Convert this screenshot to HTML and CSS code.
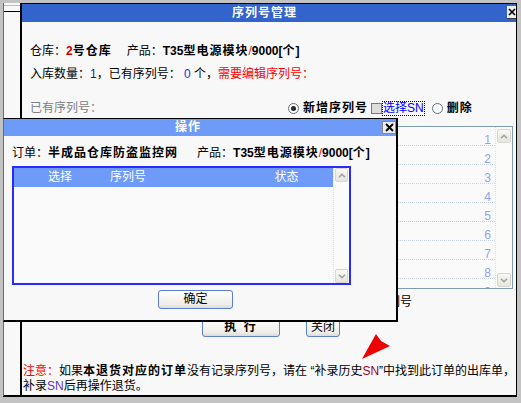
FILE: index.html
```html
<!DOCTYPE html>
<html>
<head>
<meta charset="utf-8">
<link rel="stylesheet" href="styles.css">
</head>
<body>
<div class="desk">
  <div class="strip"><div class="strip-top"></div></div>
  <div class="main">
    <div class="titlebar">
      <div class="title">序列号管理</div>
      <div class="close-btn"><svg width="8" height="8" viewBox="0 0 8 8"><path d="M1 1L7 7M7 1L1 7" stroke="#000" stroke-width="1.7"/></svg></div>
    </div>
    <div class="content">
      <div class="info">
        <div class="line">仓库：<span class="b red2">2</span><span class="bc">号仓库</span><span class="sp1"></span>产品：<span class="b">T35</span><span class="bc">型电源模块</span><span class="red">/</span><span class="b">9000[</span><span class="bc">个</span><span class="b">]</span></div>
        <div class="line line2">入库数量：<span class="navy">1</span>，已有序列号： <span class="blue">0</span> 个，<span class="red">需要编辑序列号：</span></div>
      </div>
      <div class="row3">
        <div class="gray-label">已有序列号：</div>
        <div class="opts">
          <span class="radio on"></span><span class="bc opt-label">新增序列号</span>
          <span class="check"></span><span class="sel-link">选择SN</span>
          <span class="radio"></span><span class="bc opt-label">删除</span>
        </div>
      </div>
      <div class="ta">
        <div class="ta-lines">
          <div class="ta-row">1</div>
          <div class="ta-row">2</div>
          <div class="ta-row">3</div>
          <div class="ta-row">4</div>
          <div class="ta-row">5</div>
          <div class="ta-row">6</div>
          <div class="ta-row">7</div>
          <div class="ta-row">8</div>
          <div class="ta-row">9</div>
        </div>
        <div class="vscroll">
          <div class="sb-btn"><svg width="8" height="5" viewBox="0 0 8 5"><path d="M1 4.2L4 1.2L7 4.2" fill="none" stroke="#a0a0a0" stroke-width="1.5"/></svg></div>
          <div class="sb-btn"><svg width="8" height="5" viewBox="0 0 8 5"><path d="M1 0.8L4 3.8L7 0.8" fill="none" stroke="#a0a0a0" stroke-width="1.5"/></svg></div>
        </div>
      </div>
      <div class="selrow">已选择序列号</div>
      <div class="btnrow">
        <button class="btn btn-exec">执 行</button>
        <button class="btn btn-close">关闭</button>
      </div>
      <div class="note">
        <div class="note-line"><span class="red">注意：</span>如果<span class="bc">本退货对应的订单</span>没有记录序列号，请在 “补录历史<span class="maroon">SN</span>”中找到此订单的出库单，</div>
        <div class="note-line">补录<span class="violet">SN</span>后再操作退货。</div>
      </div>
    </div>
  </div>
</div>

<div class="modal">
  <div class="m-title">
    <div class="m-title-text">操作</div>
    <div class="m-close"><svg width="9" height="9" viewBox="0 0 9 9"><path d="M1 1L8 8M8 1L1 8" stroke="#000" stroke-width="1.8"/></svg></div>
  </div>
  <div class="m-body">
    <div class="m-line">订单：<span class="bc">半成品仓库防盗监控网</span><span class="sp2"></span>产品：<span class="b">T35</span><span class="bc">型电源模块</span><span class="red">/</span><span class="b">9000[</span><span class="bc">个</span><span class="b">]</span></div>
    <div class="m-table">
      <div class="m-grid">
        <div class="m-head">
          <div class="c1">选择</div>
          <div class="c2">序列号</div>
          <div class="c3">状态</div>
        </div>
      </div>
      <div class="m-scroll">
        <div class="sb-btn"><svg width="8" height="5" viewBox="0 0 8 5"><path d="M1 4.2L4 1.2L7 4.2" fill="none" stroke="#a0a0a0" stroke-width="1.5"/></svg></div>
        <div class="sb-btn"><svg width="8" height="5" viewBox="0 0 8 5"><path d="M1 0.8L4 3.8L7 0.8" fill="none" stroke="#a0a0a0" stroke-width="1.5"/></svg></div>
      </div>
    </div>
    <div class="m-btnrow"><button class="btn btn-ok">确定</button></div>
  </div>
</div>

<svg class="arrow" width="34" height="30" viewBox="0 0 34 30"><polygon points="4,27 18,2 23,9 32,14" fill="#ee0000"/></svg>
</body>
</html>
```

FILE: styles.css
```css
html, body {
  margin: 0;
  padding: 0;
}
body {
  position: relative;
  width: 521px;
  height: 403px;
  overflow: hidden;
  background: #c3c3c3;
  font-family: "Liberation Sans", "Noto Sans CJK SC", sans-serif;
  font-size: 12px;
  color: #000;
}
.b { font-weight: bold; }
.bc { font-weight: bold; letter-spacing: 1px; }
.red { color: #ff0000; }
.red2 { color: #cc0000; }
.navy { color: #22227a; }
.blue { color: #2233cc; }
.maroon { color: #a00020; }
.violet { color: #6633cc; }

.desk {
  display: flex;
  margin: 3px 0 0 3px;
  width: 514px;
  height: 394px;
  box-sizing: border-box;
  border-left: 1px solid #6b6b6b;
  border-bottom: 2px solid #000;
  background: #f8f8f8;
}
.strip {
  width: 16px;
  flex: none;
}
.strip-top {
  margin-top: 2px;
  height: 5px;
  border-top: 1px solid #bdbdbd;
  border-bottom: 1px solid #000;
}
.main {
  width: 497px;
  flex: none;
  box-sizing: border-box;
  border-left: 2px solid #000;
  border-top: 1px solid #000;
  border-right: 1px solid #000;
  display: flex;
  flex-direction: column;
  overflow: hidden;
}
.titlebar {
  height: 18px;
  flex: none;
  background: #3264cc;
  display: flex;
  align-items: flex-start;
}
.title {
  flex: 1;
  text-align: center;
  color: #fff;
  font-weight: bold;
  letter-spacing: 1px;
  line-height: 18px;
}
.close-btn {
  width: 9px;
  height: 12px;
  margin-top: 2px;
  background: #efefef;
  border-bottom: 1px solid #3a3a3a;
  display: flex;
  align-items: center;
  justify-content: center;
}
.content {
  padding: 20px 3px 0 0;
}
.info {
  padding-left: 8px;
}
.line {
  line-height: 19px;
  height: 19px;
  white-space: nowrap;
}
.line2 {
  margin-top: 4px;
}
.sp1 { display: inline-block; width: 15px; }
.sp2 { display: inline-block; width: 19px; }
.row3 {
  display: grid;
  grid-template-columns: 258px auto;
  margin-top: 15px;
  padding-left: 8px;
  line-height: 19px;
  height: 19px;
  white-space: nowrap;
}
.gray-label { color: #808080; }
.opts {
  display: flex;
  align-items: center;
}
.radio {
  width: 11px;
  height: 11px;
  box-sizing: border-box;
  border: 1px solid #5f6f80;
  border-radius: 50%;
  background: #fff;
  display: flex;
  align-items: center;
  justify-content: center;
  margin-right: 4px;
}
.radio.on::after {
  content: "";
  width: 5px;
  height: 5px;
  border-radius: 50%;
  background: #2a2a2a;
}
.opt-label { margin-right: 2px; }
.check {
  width: 11px;
  height: 11px;
  box-sizing: border-box;
  border: 1px solid #7a7a7a;
  background: #dedede;
  margin-left: 1px;
}
.sel-link {
  color: #0000ff;
  border: 1px dotted #000;
  line-height: 13px;
  margin-right: 7px;
}
.ta {
  margin: 8px 0 0 8px;
  height: 163px;
  box-sizing: border-box;
  border: 1px solid #7f9db9;
  display: flex;
  background: #fafafa;
}
.ta-lines {
  flex: 1;
  overflow: hidden;
}
.ta-row {
  height: 11px;
  padding: 7px 4px 0 0;
  border-bottom: 1px dotted #c8d2e8;
  text-align: right;
  color: #8ea6e8;
  line-height: 12px;
}
.vscroll, .m-scroll {
  width: 17px;
  flex: none;
  box-sizing: border-box;
  border-left: 1px dotted #e0e0e0;
  background: #fbfbf9;
  display: flex;
  flex-direction: column;
  justify-content: space-between;
}
.vscroll {
  padding: 2px 1px 1px 1px;
}
.m-scroll {
  width: 16px;
  padding: 0 1px 0 1px;
}
.sb-btn {
  height: 14px;
  box-sizing: border-box;
  border: 1px solid #d8d8d0;
  border-radius: 2px;
  background: linear-gradient(#f8f8f4, #e6e6de);
  display: flex;
  align-items: center;
  justify-content: center;
}
.selrow {
  margin-top: 4px;
  line-height: 19px;
  height: 19px;
  padding-left: 318px;
  white-space: nowrap;
}
.btnrow {
  margin-top: 5px;
  display: flex;
  gap: 26px;
  padding-left: 180px;
}
.btn {
  height: 20px;
  box-sizing: border-box;
  border: 1px solid #5b7ed0;
  border-radius: 3px;
  background: linear-gradient(#ffffff, #eeede8 80%, #dcdbd4);
  font: inherit;
  color: #000;
  padding: 0;
  line-height: 18px;
}
.btn-exec {
  width: 78px;
  font-weight: bold;
  letter-spacing: 2px;
}
.btn-close {
  width: 34px;
}
.note {
  margin-top: 27px;
  padding-left: 1px;
}
.note-line {
  line-height: 15px;
  height: 15px;
  white-space: nowrap;
}

.modal {
  position: absolute;
  left: 3px;
  top: 118px;
  width: 395px;
  height: 204px;
  box-sizing: border-box;
  border-left: 1px solid #6b6b6b;
  border-top: 1px solid #000;
  border-right: 2px solid #000;
  border-bottom: 2px solid #000;
  background: #f8f8f8;
}
.m-title {
  height: 17px;
  background: #6d9bf7;
  display: flex;
  align-items: flex-start;
}
.m-title-text {
  flex: 1;
  text-align: center;
  color: #fff;
  font-weight: bold;
  letter-spacing: 1px;
  line-height: 17px;
  padding-right: 10px;
}
.m-close {
  width: 14px;
  height: 13px;
  margin-top: 2px;
  box-sizing: border-box;
  border: 1px solid #8a8a8a;
  background: #ececec;
  display: flex;
  align-items: center;
  justify-content: center;
}
.m-body {
  padding: 8px 0 0 8px;
}
.m-line {
  line-height: 18px;
  height: 18px;
  white-space: nowrap;
}
.m-table {
  margin-top: 4px;
  width: 339px;
  height: 119px;
  box-sizing: border-box;
  border: 2px solid #2a2aff;
  display: flex;
  background: #fafafa;
}
.m-grid {
  flex: 1;
}
.m-head {
  height: 19px;
  background: #6d9bf7;
  color: #fff;
  display: flex;
  line-height: 19px;
}
.c1 { width: 92px; text-align: center; }
.c2 { width: 134px; padding-left: 4px; box-sizing: border-box; }
.c3 { flex: 1; text-align: center; }
.m-btnrow {
  margin-top: 5px;
  padding-left: 146px;
}
.btn-ok {
  width: 75px;
  height: 19px;
  line-height: 17px;
}
.arrow {
  position: absolute;
  left: 358px;
  top: 332px;
}
```
